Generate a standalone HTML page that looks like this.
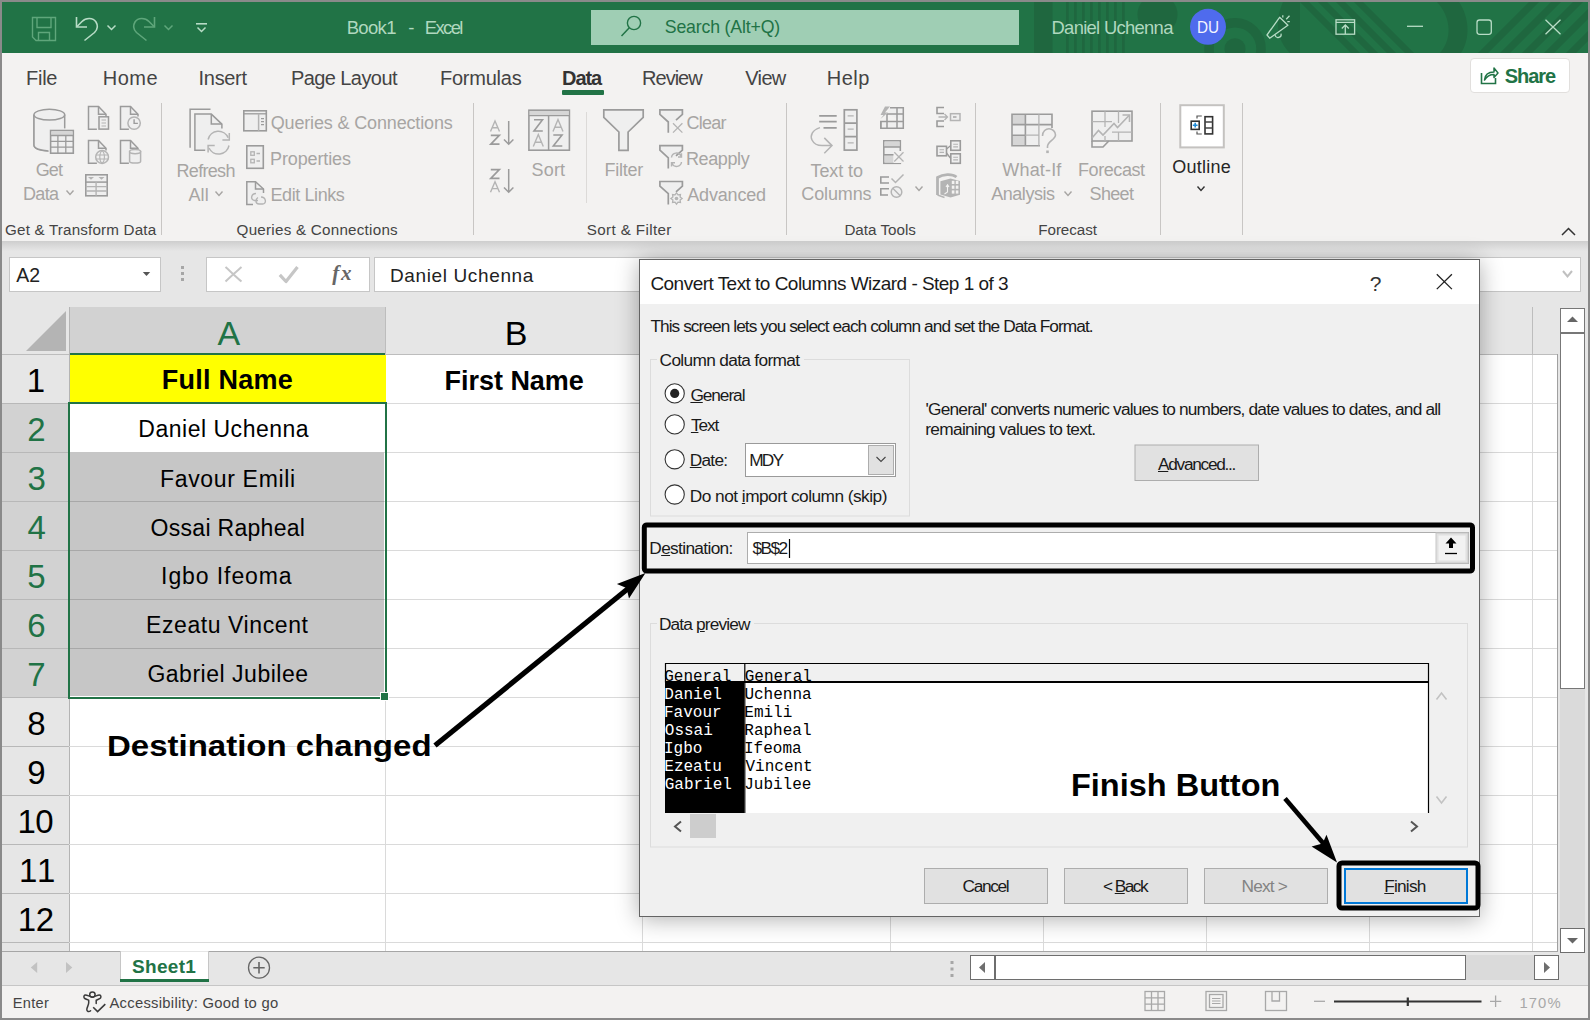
<!DOCTYPE html>
<html><head><meta charset='utf-8'><title>Excel</title><style>
*{margin:0;padding:0;box-sizing:border-box}
html,body{width:1590px;height:1020px;overflow:hidden;background:#8a8a8a;font-family:'Liberation Sans',sans-serif}
.a{position:absolute}
.t{position:absolute;white-space:pre;line-height:1;font-family:'Liberation Sans',sans-serif}
svg.a{overflow:visible}
</style></head><body>
<div class="a" style="left:2px;top:2px;width:1586px;height:51px;background:#217346;overflow:hidden"></div>
<svg class="a" style="left:2px;top:2px;overflow:hidden" width="1586" height="51" viewBox="2 2 1586 51"><rect x="1034" y="2" width="18.5" height="51" fill="#1f673f"/><rect x="1066" y="2" width="2.7" height="51" fill="#1f673f"/><rect x="1074" y="2" width="2.7" height="51" fill="#1f673f"/><rect x="1082" y="2" width="2.7" height="51" fill="#1f673f"/><rect x="1090" y="2" width="2.7" height="51" fill="#1f673f"/><rect x="1098" y="2" width="2.7" height="51" fill="#1f673f"/><rect x="1106" y="2" width="2.7" height="51" fill="#1f673f"/><rect x="1114" y="2" width="2.7" height="51" fill="#1f673f"/><rect x="1122" y="2" width="2.7" height="51" fill="#1f673f"/><circle cx="1157.5" cy="14.5" r="20" fill="#1f673f"/><circle cx="1235" cy="48.7" r="26" fill="none" stroke="#1f673f" stroke-width="9.5"/><circle cx="1235" cy="48.7" r="10.5" fill="#1f673f"/><path d="M1283 2 C1275 20 1276 40 1290 53 L1300 53 L1300 2 Z" fill="#1f673f"/><path d="M1300 2 L1309 2 L1360 53 L1351 53 Z" fill="#1f673f"/><path d="M1318 2 L1327 2 L1378 53 L1369 53 Z" fill="#1f673f"/><path d="M1336 2 L1345 2 L1396 53 L1387 53 Z" fill="#1f673f"/><path d="M1354 2 L1363 2 L1414 53 L1405 53 Z" fill="#1f673f"/><path d="M1437 2 C1452 18 1452 40 1440 53 L1461 53 C1470 40 1470 18 1459 2 Z" fill="#1f673f"/><path d="M1478 53 L1488 53 L1539 2 L1529 2 Z" fill="#1f673f"/><path d="M1500 53 L1510 53 L1561 2 L1551 2 Z" fill="#1f673f"/><path d="M1522 53 L1532 53 L1583 2 L1573 2 Z" fill="#1f673f"/><path d="M1544 53 L1554 53 L1605 2 L1595 2 Z" fill="#1f673f"/><path d="M1566 53 L1576 53 L1627 2 L1617 2 Z" fill="#1f673f"/></svg>
<svg class="a" style="left:0;top:0" width="1590" height="55" viewBox="0 0 1590 55"><path d="M32.5 17.5 H55.5 V40.5 H36 L32.5 37 Z" fill="none" stroke="#5fa67b" stroke-width="1.4"/><path d="M37 17.5 V27.5 H51 V17.5" fill="none" stroke="#5fa67b" stroke-width="1.4"/><path d="M38.5 40.5 V32.5 H49.5 V40.5" fill="none" stroke="#5fa67b" stroke-width="1.4"/><path d="M76.5 17 V27 H87" fill="none" stroke="#b8dcc6" stroke-width="1.6"/><path d="M77 26.5 L82 21.5 C86 17.5 93 17.5 96 22 C98.5 26 97 30 94.5 32.5 L84.5 40.5" fill="none" stroke="#b8dcc6" stroke-width="1.6"/><path d="M107.5 25.5 L111.5 29.5 L115.5 25.5" fill="none" stroke="#b8dcc6" stroke-width="1.5"/><path d="M154.5 17 V27 H144" fill="none" stroke="#5fa67b" stroke-width="1.6"/><path d="M154 26.5 L149 21.5 C145 17.5 138 17.5 135 22 C132.5 26 134 30 136.5 32.5 L146.5 40.5" fill="none" stroke="#5fa67b" stroke-width="1.6"/><path d="M164.5 25.5 L168.5 29.5 L172.5 25.5" fill="none" stroke="#5fa67b" stroke-width="1.5"/><path d="M196 23.8 H207" stroke="#b8dcc6" stroke-width="1.6"/><path d="M197.5 27.5 L201.5 31.5 L205.5 27.5" fill="none" stroke="#b8dcc6" stroke-width="1.5"/><rect x="591.5" y="10.5" width="427" height="34" fill="#9fceb4" stroke="#9fceb4"/><circle cx="634" cy="23" r="6.6" fill="none" stroke="#217346" stroke-width="1.4"/><path d="M629.3 27.8 L621.5 36" stroke="#217346" stroke-width="1.5"/><circle cx="1208" cy="26.8" r="18" fill="#4f6bed"/><path d="M1267 35 L1279.6 17.3 L1287.9 25.3 L1269.7 38.2 Z" fill="none" stroke="#b8dcc6" stroke-width="1.3" stroke-linejoin="round"/><path d="M1275 35.2 A3 3 0 0 0 1281 33.6" fill="none" stroke="#b8dcc6" stroke-width="1.3"/><path d="M1282.8 15.3 V17.5 M1286.2 19.3 L1289.5 15.8 M1287.3 21.7 H1289.8" stroke="#b8dcc6" stroke-width="1.3"/><rect x="1336" y="19.8" width="18.6" height="14.4" fill="none" stroke="#b8dcc6" stroke-width="1.3"/><path d="M1336 22.3 H1354.6 M1345.3 25 V34 M1341.8 28.5 L1345.3 25 L1348.8 28.5" fill="none" stroke="#b8dcc6" stroke-width="1.3"/><path d="M1407 26.3 H1423" stroke="#b8dcc6" stroke-width="1.3"/><rect x="1477" y="20" width="14.3" height="14.3" rx="2.5" fill="none" stroke="#b8dcc6" stroke-width="1.3"/><path d="M1545.5 19.8 L1560.5 34.2 M1560.5 19.8 L1545.5 34.2" stroke="#b8dcc6" stroke-width="1.3"/></svg>
<div class="t" style="left:346.70px;top:18.94px;font-size:18.5px;color:#b0d8bf;letter-spacing:-0.675px;">Book1</div>
<div class="t" style="left:408.30px;top:18.94px;font-size:18.5px;color:#b0d8bf;">-</div>
<div class="t" style="left:424.80px;top:18.94px;font-size:18.5px;color:#b0d8bf;letter-spacing:-1.650px;">Excel</div>
<div class="t" style="left:664.80px;top:19.21px;font-size:17.7px;color:#217346;letter-spacing:-0.162px;">Search (Alt+Q)</div>
<div class="t" style="left:1051.50px;top:18.92px;font-size:18.4px;color:#b0d8bf;letter-spacing:-0.692px;">Daniel Uchenna</div>
<div class="t" style="left:1197.06px;top:19.95px;font-size:16px;color:#f4f4ff;transform:scaleX(0.9565);transform-origin:0 0;">DU</div>
<div class="a" style="left:2px;top:53px;width:1586px;height:188px;background:#f3f2f1"></div>
<div class="a" style="left:2px;top:241px;width:1586px;height:66px;background:#e6e6e6"></div>
<div class="a" style="left:2px;top:241px;width:1586px;height:10px;background:linear-gradient(#cecece,#e6e6e6)"></div>
<div class="t" style="left:26.00px;top:67.77px;font-size:20px;color:#444444;letter-spacing:-0.267px;">File</div>
<div class="t" style="left:102.70px;top:67.77px;font-size:20px;color:#444444;letter-spacing:0.500px;">Home</div>
<div class="t" style="left:198.60px;top:67.77px;font-size:20px;color:#444444;letter-spacing:-0.320px;">Insert</div>
<div class="t" style="left:290.90px;top:67.77px;font-size:20px;color:#444444;letter-spacing:-0.570px;">Page Layout</div>
<div class="t" style="left:439.90px;top:67.77px;font-size:20px;color:#444444;letter-spacing:-0.229px;">Formulas</div>
<div class="t" style="left:642.10px;top:67.77px;font-size:20px;color:#444444;letter-spacing:-1.000px;">Review</div>
<div class="t" style="left:745.30px;top:67.77px;font-size:20px;color:#444444;letter-spacing:-0.667px;">View</div>
<div class="t" style="left:826.70px;top:67.77px;font-size:20px;color:#444444;letter-spacing:0.533px;">Help</div>
<div class="t" style="left:562.10px;top:67.57px;font-size:20px;color:#333;font-weight:bold;letter-spacing:-1.067px;">Data</div>
<div class="a" style="left:562px;top:90px;width:42px;height:5px;background:#217346;border-radius:1px"></div>
<div class="a" style="left:161px;top:103px;width:1px;height:132px;background:#c8c6c4"></div>
<div class="a" style="left:473px;top:103px;width:1px;height:132px;background:#c8c6c4"></div>
<div class="a" style="left:786px;top:103px;width:1px;height:132px;background:#c8c6c4"></div>
<div class="a" style="left:975px;top:103px;width:1px;height:132px;background:#c8c6c4"></div>
<div class="a" style="left:1160px;top:103px;width:1px;height:132px;background:#c8c6c4"></div>
<div class="a" style="left:1242px;top:103px;width:1px;height:132px;background:#c8c6c4"></div>
<div class="a" style="left:586px;top:112px;width:1px;height:91px;background:#dcdad8"></div>
<div class="t" style="left:5.00px;top:222.43px;font-size:15.2px;color:#444444;letter-spacing:0.184px;">Get &amp; Transform Data</div>
<div class="t" style="left:236.60px;top:222.43px;font-size:15.2px;color:#444444;letter-spacing:0.245px;">Queries &amp; Connections</div>
<div class="t" style="left:586.70px;top:222.43px;font-size:15.2px;color:#444444;letter-spacing:0.375px;">Sort &amp; Filter</div>
<div class="t" style="left:844.40px;top:222.43px;font-size:15.2px;color:#444444;">Data Tools</div>
<div class="t" style="left:1038.30px;top:222.43px;font-size:15.2px;color:#444444;letter-spacing:-0.071px;">Forecast</div>
<div class="t" style="left:35.70px;top:161.06px;font-size:18px;color:#a7a5a3;letter-spacing:-0.900px;">Get</div>
<div class="t" style="left:22.90px;top:185.16px;font-size:18px;color:#a7a5a3;letter-spacing:-0.633px;">Data</div>
<div class="t" style="left:176.50px;top:161.96px;font-size:18px;color:#a7a5a3;letter-spacing:-0.683px;">Refresh</div>
<div class="t" style="left:188.40px;top:185.86px;font-size:18px;color:#a7a5a3;letter-spacing:0.200px;">All</div>
<div class="t" style="left:270.70px;top:114.16px;font-size:18px;color:#a7a5a3;letter-spacing:-0.150px;">Queries &amp; Connections</div>
<div class="t" style="left:270.10px;top:149.96px;font-size:18px;color:#a7a5a3;letter-spacing:-0.133px;">Properties</div>
<div class="t" style="left:270.50px;top:186.06px;font-size:18px;color:#a7a5a3;letter-spacing:-0.411px;">Edit Links</div>
<div class="t" style="left:531.50px;top:161.26px;font-size:18px;color:#a7a5a3;letter-spacing:0.200px;">Sort</div>
<div class="t" style="left:604.60px;top:161.26px;font-size:18px;color:#a7a5a3;letter-spacing:-0.260px;">Filter</div>
<div class="t" style="left:686.40px;top:113.86px;font-size:18px;color:#a7a5a3;letter-spacing:-0.700px;">Clear</div>
<div class="t" style="left:685.90px;top:149.76px;font-size:18px;color:#a7a5a3;letter-spacing:-0.383px;">Reapply</div>
<div class="t" style="left:687.30px;top:185.66px;font-size:18px;color:#a7a5a3;letter-spacing:-0.186px;">Advanced</div>
<div class="t" style="left:810.60px;top:161.56px;font-size:18px;color:#a7a5a3;letter-spacing:-0.117px;">Text to</div>
<div class="t" style="left:801.30px;top:185.26px;font-size:18px;color:#a7a5a3;letter-spacing:-0.117px;">Columns</div>
<div class="t" style="left:1002.30px;top:161.26px;font-size:18px;color:#a7a5a3;letter-spacing:0.167px;">What-If</div>
<div class="t" style="left:991.30px;top:185.26px;font-size:18px;color:#a7a5a3;letter-spacing:-0.486px;">Analysis</div>
<div class="t" style="left:1078.00px;top:161.26px;font-size:18px;color:#a7a5a3;letter-spacing:-0.414px;">Forecast</div>
<div class="t" style="left:1089.60px;top:185.26px;font-size:18px;color:#a7a5a3;letter-spacing:-0.675px;">Sheet</div>
<div class="t" style="left:1172.30px;top:157.66px;font-size:18px;color:#262626;letter-spacing:0.233px;">Outline</div>
<svg class="a" style="left:66px;top:190px;" width="8" height="5" viewBox="0 0 8 5"><path d="M0.5 0.5 L4.0 4.5 L7.5 0.5" fill="none" stroke="#a7a5a3" stroke-width="1.4"/></svg>
<svg class="a" style="left:215px;top:191px;" width="8" height="5" viewBox="0 0 8 5"><path d="M0.5 0.5 L4.0 4.5 L7.5 0.5" fill="none" stroke="#a7a5a3" stroke-width="1.4"/></svg>
<svg class="a" style="left:914.5px;top:186px;" width="8" height="5" viewBox="0 0 8 5"><path d="M0.5 0.5 L4.0 4.5 L7.5 0.5" fill="none" stroke="#a7a5a3" stroke-width="1.4"/></svg>
<svg class="a" style="left:1064px;top:191px;" width="8" height="5" viewBox="0 0 8 5"><path d="M0.5 0.5 L4.0 4.5 L7.5 0.5" fill="none" stroke="#a7a5a3" stroke-width="1.4"/></svg>
<svg class="a" style="left:1197px;top:186px;" width="8" height="5" viewBox="0 0 8 5"><path d="M0.5 0.5 L4.0 4.5 L7.5 0.5" fill="none" stroke="#333" stroke-width="1.4"/></svg>
<div class="a" style="left:1469.5px;top:57.5px;width:100px;height:35px;background:#fff;border:1px solid #e1dfdd;border-radius:4px"></div>
<div class="t" style="left:1504.70px;top:66.27px;font-size:20px;color:#217346;font-weight:bold;letter-spacing:-1.050px;">Share</div>
<svg class="a" style="left:1480px;top:66px;" width="19" height="19" viewBox="0 0 19 19"><path d="M1.5 7 V17.5 H15.5 V12" fill="none" stroke="#217346" stroke-width="1.6"/><path d="M4.5 14 C5 8 9 6 14 6 V2 L18 7 L14 11.5 V8.5 C10 8.5 7 10 4.5 14Z" fill="none" stroke="#217346" stroke-width="1.5" stroke-linejoin="round"/></svg>
<svg class="a" style="left:1561px;top:227px;" width="15" height="9" viewBox="0 0 15 9"><path d="M1 8 L7.5 1.5 L14 8" fill="none" stroke="#333" stroke-width="1.5"/></svg>
<svg class="a" style="left:0;top:0" width="1590" height="250" viewBox="0 0 1590 250"><path d="M34 114.7 V145 C34 148.5 41 150.7 48.5 150.7" fill="#efefef" stroke="#9b9b9b" stroke-width="1.5" /><path d="M34 114.7 V145 C34 149 42 151 49 151 L50 130 L64.7 130 V114.7 Z" fill="#efefef"/><path d="M34 114.7 V145 C34 148.8 41 150.7 48.5 150.9" fill="none" stroke="#9b9b9b" stroke-width="1.5" /><path d="M64.7 114.7 V128.4" fill="none" stroke="#9b9b9b" stroke-width="1.5" /><ellipse cx="49.35" cy="114.7" rx="15.35" ry="5.4" fill="#efefef" stroke="#9b9b9b" stroke-width="1.5"/><rect x="50.6" y="130.5" width="22.7" height="22.7" fill="#efefef" stroke="#9b9b9b" stroke-width="1.6"/><rect x="51.4" y="131.3" width="21.1" height="4.2" fill="#d6d6d6"/><path d="M50.6 135.5 H73.3 M50.6 141.3 H73.3 M50.6 147.2 H73.3 M57.9 135.5 V153.2 M65.8 135.5 V153.2" fill="none" stroke="#9b9b9b" stroke-width="1.3" /><path d="M88.5 106.5 H98.5 L106.0 114.3 V129.3 H88.5 Z" fill="#efefef"/><path d="M96.9 129.3 H88.5 V106.5 H98.5 L106.0 114.3 V116.5" fill="none" stroke="#9b9b9b" stroke-width="1.5" /><path d="M98.5 106.5 V114.3 H106.0" fill="none" stroke="#9b9b9b" stroke-width="1.5" /><rect x="99" y="116.8" width="9.5" height="12.3" fill="#efefef" stroke="#9b9b9b" stroke-width="1.5"/><path d="M101.5 120 H106 M101.5 123 H106 M101.5 126 H106" fill="none" stroke="#b4b4b4" stroke-width="1.1" /><path d="M120.5 106.5 H130.5 L138.0 114.3 V129.3 H120.5 Z" fill="#efefef"/><path d="M128.9 129.3 H120.5 V106.5 H130.5 L138.0 114.3 V116.5" fill="none" stroke="#9b9b9b" stroke-width="1.5" /><path d="M130.5 106.5 V114.3 H138.0" fill="none" stroke="#9b9b9b" stroke-width="1.5" /><circle cx="134.1" cy="123.1" r="6.2" fill="#efefef" stroke="#b4b4b4" stroke-width="1.5"/><path d="M134.1 119.3 V123.4 H137.9" fill="none" stroke="#9b9b9b" stroke-width="1.4" /><path d="M88.5 140.5 H98.5 L106.0 148.3 V163.3 H88.5 Z" fill="#efefef"/><path d="M96.9 163.3 H88.5 V140.5 H98.5 L106.0 148.3 V150.5" fill="none" stroke="#9b9b9b" stroke-width="1.5" /><path d="M98.5 140.5 V148.3 H106.0" fill="none" stroke="#9b9b9b" stroke-width="1.5" /><circle cx="102.1" cy="157" r="6.4" fill="#efefef" stroke="#b4b4b4" stroke-width="1.5"/><path d="M95.8 155 H108.4 M95.8 159 H108.4 M102.1 150.6 C99 153 99 161 102.1 163.4 C105.2 161 105.2 153 102.1 150.6" fill="none" stroke="#b4b4b4" stroke-width="1.1" /><path d="M120.5 140.5 H130.5 L138.0 148.3 V163.3 H120.5 Z" fill="#efefef"/><path d="M128.9 163.3 H120.5 V140.5 H130.5 L138.0 148.3 V150.5" fill="none" stroke="#9b9b9b" stroke-width="1.5" /><path d="M130.5 140.5 V148.3 H138.0" fill="none" stroke="#9b9b9b" stroke-width="1.5" /><path d="M129.6 151.6 V161.5 C129.6 163.6 140.6 163.6 140.6 161.5 V151.6 Z" fill="#efefef" stroke="#b4b4b4" stroke-width="1.5"/><ellipse cx="135.1" cy="151.6" rx="5.5" ry="2.2" fill="#efefef" stroke="#b4b4b4" stroke-width="1.5"/><rect x="85.8" y="174.8" width="21.4" height="21" fill="#efefef" stroke="#9b9b9b" stroke-width="1.6"/><path d="M85.8 182.1 H107.2" fill="none" stroke="#9b9b9b" stroke-width="1.5" /><path d="M85.8 186.6 H107.2 M85.8 191 H107.2 M96.1 182.1 V195.8" fill="none" stroke="#b4b4b4" stroke-width="1.4" /><path d="M88 177 H94 L91 179.8 Z M98.5 177 H104.5 L101.5 179.8 Z" fill="#b4b4b4"/><path d="M190.1 147.7 V109.3 H210.5" fill="none" stroke="#9b9b9b" stroke-width="1.5" /><path d="M194.9 114.1 H211.3 L221.9 124.1 V150.3 H194.9 Z" fill="#efefef"/><path d="M205.2 150.3 H194.9 V114.1 H211.3 L221.9 124.1 V128.6" fill="none" stroke="#9b9b9b" stroke-width="1.5" /><path d="M211.3 114.1 V124.1 H221.9" fill="none" stroke="#9b9b9b" stroke-width="1.5" /><circle cx="218.4" cy="142.7" r="10.8" fill="#efefef" stroke="none"/><path d="M208.1 139.5 A10.6 10.6 0 0 1 228.2 137.8" fill="none" stroke="#b4b4b4" stroke-width="1.5" /><path d="M229.3 133.1 V140 H222.4" fill="none" stroke="#b4b4b4" stroke-width="1.5" /><path d="M229 145.5 A10.6 10.6 0 0 1 209 148" fill="none" stroke="#b4b4b4" stroke-width="1.5" /><path d="M208.1 152.5 V145.6 H214.7" fill="none" stroke="#b4b4b4" stroke-width="1.5" /><rect x="243.8" y="110.8" width="22.5" height="20" fill="#efefef" stroke="#9b9b9b" stroke-width="1.6"/><path d="M243.8 113.8 H266.3" fill="none" stroke="#9b9b9b" stroke-width="1.3" /><path d="M258.6 113.8 V130.8" fill="none" stroke="#b4b4b4" stroke-width="1.5" /><path d="M261 118.6 H264 M261 121.6 H264 M261 124.6 H264" fill="none" stroke="#9b9b9b" stroke-width="1.4" /><rect x="246.8" y="145.8" width="16.5" height="22.5" fill="#efefef" stroke="#9b9b9b" stroke-width="1.6"/><rect x="250.8" y="151.8" width="3.5" height="3.5" fill="#efefef" stroke="#b4b4b4" stroke-width="1.3"/><rect x="250.8" y="159.3" width="3.5" height="3.5" fill="#efefef" stroke="#b4b4b4" stroke-width="1.3"/><path d="M256.5 153.5 H260 M256.5 161 H260" fill="none" stroke="#b4b4b4" stroke-width="1.3" /><path d="M246.8 181.8 H255.5 L263.5 189 V204.5 H246.8 Z" fill="#efefef"/><path d="M253 204.5 H246.8 V181.8 H255.5 L263.5 189 V193" fill="none" stroke="#9b9b9b" stroke-width="1.5" /><path d="M255.5 181.8 V189 H263.5" fill="none" stroke="#9b9b9b" stroke-width="1.5" /><path d="M256 193.5 C251 193.5 250 200 254.5 200.5 H258 M261 197 C266 197 267 203.8 262.5 204 H259 C255 204 255.3 199 258 197.5" fill="none" stroke="#b4b4b4" stroke-width="1.4" /><path d="M490.5 131.5 L495 121 L499.5 131.5 M492.2 127.8 H497.8" fill="none" stroke="#b4b4b4" stroke-width="1.4" /><path d="M490.8 135.4 H499.3 L490.8 144.20000000000002 H499.5" fill="none" stroke="#9b9b9b" stroke-width="1.7" /><path d="M508.7 121 V144.5 M504 139.5 L508.7 144.3 L513.4 139.5" fill="none" stroke="#9b9b9b" stroke-width="1.5" /><path d="M490.8 169.6 H499.3 L490.8 178.4 H499.5" fill="none" stroke="#9b9b9b" stroke-width="1.7" /><path d="M490.5 192.3 L495 181.8 L499.5 192.3 M492.2 188.60000000000002 H497.8" fill="none" stroke="#b4b4b4" stroke-width="1.4" /><path d="M508.7 169 V192.5 M504 187.5 L508.7 192.3 L513.4 187.5" fill="none" stroke="#9b9b9b" stroke-width="1.5" /><rect x="528.9" y="110.2" width="40.5" height="40" fill="#efefef" stroke="#9b9b9b" stroke-width="1.6"/><rect x="529.7" y="111" width="38.9" height="4.6" fill="#d6d6d6"/><path d="M528.9 115.6 H569.4" fill="none" stroke="#9b9b9b" stroke-width="1.4" /><path d="M548.6 115.6 V150.2" fill="none" stroke="#9b9b9b" stroke-width="1.5" /><path d="M534 119.8 H542.5 L534 131 H542.8" fill="none" stroke="#9b9b9b" stroke-width="1.6" /><path d="M533.3 146.5 L538.3 134.5 L543.3 146.5 M535 142.3 H541.6" fill="none" stroke="#b4b4b4" stroke-width="1.4" /><path d="M553 131.5 L558 119.5 L563 131.5 M554.7 127.3 H561.3" fill="none" stroke="#b4b4b4" stroke-width="1.4" /><path d="M553.3 135 H562 L553.3 146 H562.3" fill="none" stroke="#9b9b9b" stroke-width="1.6" /><path d="M603.8 109.8 H643.2 V117.3 L628.1 132 V150.4 H618.9 V132 L603.8 117.3 Z" fill="#efefef" stroke="#9b9b9b" stroke-width="1.7" /><path d="M659.9 109.8 H682.4 V114.39999999999999 L675 121.8 L668.3 122.0 L659.9 114.39999999999999 Z" fill="#efefef"/><path d="M668.3 132.8 V122.0 L659.9 114.39999999999999 V109.8 H682.4 V114.39999999999999 L676 120.1" fill="none" stroke="#9b9b9b" stroke-width="1.7" /><path d="M673 123.2 L682.4 132.6 M682.4 123.2 L673 132.6" fill="none" stroke="#b4b4b4" stroke-width="1.3" /><path d="M659.9 145.6 H682.4 V150.2 L675 157.6 L668.3 157.79999999999998 L659.9 150.2 Z" fill="#efefef"/><path d="M668.3 168.6 V157.79999999999998 L659.9 150.2 V145.6 H682.4 V150.2 L676 155.9" fill="none" stroke="#9b9b9b" stroke-width="1.7" /><path d="M671.5 157.5 A5 5 0 0 1 681 156 M681.5 153.3 V157 H678 M681.5 162 A5 5 0 0 1 672 163.5 M671.5 166.5 V162.7 H675" fill="none" stroke="#b4b4b4" stroke-width="1.4" /><path d="M659.9 181.5 H682.4 V186.1 L675 193.5 L668.3 193.7 L659.9 186.1 Z" fill="#efefef"/><path d="M668.3 204.5 V193.7 L659.9 186.1 V181.5 H682.4 V186.1 L676 191.8" fill="none" stroke="#9b9b9b" stroke-width="1.7" /><path d="M682.10 198.50 L680.10 199.99 L680.46 202.46 L677.99 202.10 L676.50 204.10 L675.01 202.10 L672.54 202.46 L672.90 199.99 L670.90 198.50 L672.90 197.01 L672.54 194.54 L675.01 194.90 L676.50 192.90 L677.99 194.90 L680.46 194.54 L680.10 197.01 Z" fill="#efefef" stroke="#b4b4b4" stroke-width="1.3"/><circle cx="676.5" cy="198.5" r="1.8" fill="#b4b4b4"/><path d="M819.2 115.8 H836.7 M819.2 121.7 H836.7 M823.5 127.8 H836.7" fill="none" stroke="#9b9b9b" stroke-width="1.8" /><path d="M820 127.6 C812 130 810 136 812 140 C814 144 818 145.6 822 145.6 H831.5 M824.3 137.9 L832 145.6 L824.3 153.3" fill="none" stroke="#b4b4b4" stroke-width="1.5" /><rect x="844.3" y="109.8" width="12.6" height="40.3" fill="#efefef" stroke="#9b9b9b" stroke-width="1.7"/><path d="M844.3 123.1 H856.9 M844.3 136.6 H856.9" fill="none" stroke="#9b9b9b" stroke-width="1.6" /><path d="M847.6 115.8 H853.7 M847.6 129.2 H853.7 M847.6 142.9 H853.7" fill="none" stroke="#b4b4b4" stroke-width="1.2" /><path d="M887 114 V128.3 H880.8 V121.5 H903.3 M890 107.8 H903.3 V128.3 H880.8 M897 107.8 V128.3 M887 114 H903.3" fill="#efefef" stroke="#9b9b9b" stroke-width="1.5"/><path d="M880.8 121.5 V128.3" stroke="#9b9b9b" stroke-width="1.5"/><path d="M890 106.5 L885 106.5 L880.5 115 H883.5 L880.5 119 L888 112.5 H885 Z" fill="#b4b4b4"/><rect x="883.8" y="140.8" width="16.5" height="22.5" fill="#efefef" stroke="#9b9b9b" stroke-width="1.6"/><rect x="884.5" y="141.5" width="15" height="5.5" fill="#d6d6d6"/><rect x="884.5" y="155" width="9" height="7.5" fill="#d6d6d6"/><path d="M883.8 147 H900.3 M883.8 154.8 H894" fill="none" stroke="#9b9b9b" stroke-width="1.4" /><rect x="893.5" y="151" width="8" height="12" fill="#f3f2f1"/><path d="M894.3 152.3 L903.5 161.5 M903.5 152.3 L894.3 161.5" fill="none" stroke="#b4b4b4" stroke-width="1.3" /><path d="M889 177 H880.8 V183 H889" fill="none" stroke="#9b9b9b" stroke-width="1.6" /><path d="M891.5 178.5 L895.5 182.5 L903.5 174.5" fill="none" stroke="#b4b4b4" stroke-width="1.5" /><path d="M889 188.8 H880.8 V195 H888" fill="none" stroke="#9b9b9b" stroke-width="1.6" /><circle cx="896.5" cy="192" r="5.3" fill="#efefef" stroke="#b4b4b4" stroke-width="1.5"/><path d="M892.8 188.3 L900.2 195.7" fill="none" stroke="#b4b4b4" stroke-width="1.4" /><path d="M944 107.5 H937 V113.5 H944 M944 121 H937 V126.5 H944" fill="none" stroke="#9b9b9b" stroke-width="1.6" /><rect x="950.5" y="113.7" width="9.5" height="6.8" fill="#efefef" stroke="#b4b4b4" stroke-width="1.5"/><path d="M953 117 H956.5" fill="none" stroke="#9b9b9b" stroke-width="1.3" /><path d="M938.5 117 H947.5 M944.5 114 L947.5 117 L944.5 120" fill="none" stroke="#b4b4b4" stroke-width="1.3" /><rect x="937" y="146.3" width="9.5" height="9.5" fill="#efefef" stroke="#9b9b9b" stroke-width="1.6"/><rect x="950.8" y="140.8" width="9.5" height="9.5" fill="#efefef" stroke="#9b9b9b" stroke-width="1.6"/><rect x="950.8" y="153.8" width="9.5" height="9.5" fill="#efefef" stroke="#9b9b9b" stroke-width="1.6"/><path d="M939.5 149.8 H944 M939.5 152.4 H944 M953.2 144.3 H958 M953.2 146.9 H958 M953.2 157.3 H958 M953.2 159.9 H958" fill="none" stroke="#b4b4b4" stroke-width="1.1" /><path d="M946.5 149 L950.8 145.5 M946.5 153 L950.8 158.5" fill="none" stroke="#9b9b9b" stroke-width="1.3" /><path d="M937.5 195 V177.5 C943 174 952 173.5 956.5 177" fill="none" stroke="#b4b4b4" stroke-width="2.8"/><path d="M937.5 195 L944.5 197.5" fill="none" stroke="#b4b4b4" stroke-width="1.5"/><path d="M940.4 181.2 L950.5 178.4 L960 181 V194.8 L950.5 197.6 L940.4 194.5 Z" fill="#b4b4b4"/><rect x="951.8" y="180.8" width="2.6" height="3.2" fill="#f3f2f1"/><rect x="951.8" y="185.6" width="2.6" height="3.2" fill="#f3f2f1"/><rect x="951.8" y="190.4" width="2.6" height="3.2" fill="#f3f2f1"/><rect x="955.8" y="180.8" width="2.6" height="3.2" fill="#f3f2f1"/><rect x="955.8" y="185.6" width="2.6" height="3.2" fill="#f3f2f1"/><rect x="955.8" y="190.4" width="2.6" height="3.2" fill="#f3f2f1"/><path d="M947.5 185.5 V192 L944.5 194 M946 187 L947.5 184.8 L949 187" fill="none" stroke="#f3f2f1" stroke-width="1.1"/><rect x="1012" y="114.2" width="39.8" height="31.5" fill="#efefef"/><rect x="1012" y="114.2" width="13.4" height="10.4" fill="#d6d6d6"/><rect x="1012" y="135.2" width="13.4" height="10.5" fill="#d6d6d6"/><path d="M1052 136 V114.2 H1012 V145.7 H1044" fill="none" stroke="#9b9b9b" stroke-width="1.6" /><path d="M1025.4 114.2 V145.7 M1012 124.6 H1052 M1012 135.2 H1025.4" fill="none" stroke="#9b9b9b" stroke-width="1.6" /><path d="M1038.9 114.2 V145.7 M1025.4 135.2 H1038.9" fill="none" stroke="#b4b4b4" stroke-width="1.3" /><path d="M1040 128 H1054 V152 H1040 Z" fill="#f3f2f1"/><path d="M1042.5 136 C1042.5 131 1046 128.8 1049 128.8 C1052.5 128.8 1055.5 131.5 1055.5 135 C1055.5 139.5 1047.5 141.5 1047.5 146.5 V148" fill="none" stroke="#b4b4b4" stroke-width="1.6" /><rect x="1046.2" y="150.5" width="2.6" height="2.6" fill="#b4b4b4"/><rect x="1092" y="111.2" width="40" height="29.8" fill="#efefef" stroke="#9b9b9b" stroke-width="1.6"/><path d="M1092 141 V147 H1103 L1108.8 141" fill="none" stroke="#9b9b9b" stroke-width="1.6" /><path d="M1105 111.2 V127 M1118.5 111.2 V123 M1092 121.7 H1112 M1112 132.2 H1132 M1118.5 132.2 V141 M1105 136 V141" fill="none" stroke="#b4b4b4" stroke-width="1.3" /><path d="M1092 138 L1098.5 130.5 L1103 135 L1114 123.5 L1117.5 127.5 L1129.5 115" fill="none" stroke="#b4b4b4" stroke-width="1.6" /><path d="M1122.5 115 H1129.5 V122" fill="none" stroke="#b4b4b4" stroke-width="1.6" /><rect x="1180.3" y="105.2" width="43.5" height="42.2" fill="#fff" stroke="#c4c2c0" stroke-width="2"/><rect x="1191.2" y="121.2" width="8" height="8.2" fill="#fff" stroke="#333" stroke-width="1.6"/><path d="M1195.2 122.8 V127.6 M1192.8 125.2 H1197.6" fill="none" stroke="#1e8bd8" stroke-width="1.6" /><path d="M1197 118.5 V116 H1201.8 M1197 131.5 V134 H1201.8" fill="none" stroke="#555" stroke-width="1.2" /><rect x="1205" y="116.7" width="7.6" height="17.2" fill="#fff" stroke="#333" stroke-width="1.6"/><path d="M1205 122 H1212.6 M1205 128 H1212.6" fill="none" stroke="#444" stroke-width="1.3" /></svg>
<div class="a" style="left:9px;top:257px;width:152px;height:35px;background:#fff;border:1px solid #c6c6c6"></div>
<div class="a" style="left:206px;top:257px;width:164px;height:35px;background:#fff;border:1px solid #c6c6c6"></div>
<div class="a" style="left:374px;top:257px;width:1207px;height:35px;background:#fff;border:1px solid #c6c6c6"></div>
<svg class="a" style="left:0;top:240px" width="1590" height="60" viewBox="0 240 1590 60"><path d="M142.8 272 H150.2 L146.5 276 Z" fill="#555"/><rect x="181" y="266.0" width="3" height="3" fill="#a6a6a6"/><rect x="181" y="272.0" width="3" height="3" fill="#a6a6a6"/><rect x="181" y="278.0" width="3" height="3" fill="#a6a6a6"/><path d="M225.5 267 C229 270 235 276 241.5 281.5 M241.5 267 C237 271 231 276 225.5 281.5" fill="none" stroke="#c6c6c6" stroke-width="2"/><path d="M279.8 274.8 L286 281.5 L297.5 267" fill="none" stroke="#c6c6c6" stroke-width="3.2" stroke-linejoin="round"/><path d="M1563 271 L1567.5 276.5 L1572 271" fill="none" stroke="#c0c0c0" stroke-width="2"/></svg>
<div class="t" style="left:16.20px;top:266.29px;font-size:19.5px;color:#222;letter-spacing:0.100px;">A2</div>
<div class="t" style="left:389.90px;top:266.41px;font-size:19px;color:#222;letter-spacing:0.638px;">Daniel Uchenna</div>
<div class="t" style="left:332.30px;top:263.22px;font-size:21px;color:#666;letter-spacing:1.600px;font-family:'Liberation Serif',serif;font-style:italic;font-weight:bold;">fx</div>
<div class="a" style="left:2px;top:307px;width:1556px;height:47px;background:#e6e6e6"></div>
<div class="a" style="left:2px;top:354px;width:67px;height:597px;background:#e6e6e6"></div>
<div class="a" style="left:69px;top:354px;width:1489px;height:597px;background:#fff"></div>
<svg class="a" style="left:26px;top:311px;" width="40" height="40" viewBox="0 0 40 40"><path d="M40 0 L40 40 L0 40 Z" fill="#b4b4b4"/></svg>
<div class="a" style="left:70px;top:307px;width:315px;height:47px;background:#d2d2d2"></div>
<div class="a" style="left:2px;top:403px;width:67px;height:294px;background:#d2d2d2"></div>
<div class="a" style="left:69px;top:307px;width:1px;height:47px;background:#bdbdbd"></div>
<div class="a" style="left:385px;top:307px;width:1px;height:47px;background:#bdbdbd"></div>
<div class="a" style="left:642px;top:307px;width:1px;height:47px;background:#bdbdbd"></div>
<div class="a" style="left:890px;top:307px;width:1px;height:47px;background:#bdbdbd"></div>
<div class="a" style="left:1043px;top:307px;width:1px;height:47px;background:#bdbdbd"></div>
<div class="a" style="left:1206px;top:307px;width:1px;height:47px;background:#bdbdbd"></div>
<div class="a" style="left:1369px;top:307px;width:1px;height:47px;background:#bdbdbd"></div>
<div class="a" style="left:1532px;top:307px;width:1px;height:47px;background:#bdbdbd"></div>
<div class="a" style="left:2px;top:354px;width:1556px;height:1px;background:#bdbdbd"></div>
<div class="a" style="left:69px;top:353px;width:316px;height:2px;background:#217346"></div>
<div class="a" style="left:69px;top:307px;width:1px;height:644px;background:#b4b4b4"></div>
<div class="a" style="left:2px;top:403px;width:67px;height:1px;background:#b8b8b8"></div>
<div class="a" style="left:2px;top:452px;width:67px;height:1px;background:#b8b8b8"></div>
<div class="a" style="left:2px;top:501px;width:67px;height:1px;background:#b8b8b8"></div>
<div class="a" style="left:2px;top:550px;width:67px;height:1px;background:#b8b8b8"></div>
<div class="a" style="left:2px;top:599px;width:67px;height:1px;background:#b8b8b8"></div>
<div class="a" style="left:2px;top:648px;width:67px;height:1px;background:#b8b8b8"></div>
<div class="a" style="left:2px;top:697px;width:67px;height:1px;background:#b8b8b8"></div>
<div class="a" style="left:2px;top:746px;width:67px;height:1px;background:#b8b8b8"></div>
<div class="a" style="left:2px;top:795px;width:67px;height:1px;background:#b8b8b8"></div>
<div class="a" style="left:2px;top:844px;width:67px;height:1px;background:#b8b8b8"></div>
<div class="a" style="left:2px;top:893px;width:67px;height:1px;background:#b8b8b8"></div>
<div class="a" style="left:2px;top:942px;width:67px;height:1px;background:#b8b8b8"></div>
<div class="a" style="left:385px;top:355px;width:1px;height:596px;background:#dadada"></div>
<div class="a" style="left:642px;top:355px;width:1px;height:596px;background:#dadada"></div>
<div class="a" style="left:890px;top:355px;width:1px;height:596px;background:#dadada"></div>
<div class="a" style="left:1043px;top:355px;width:1px;height:596px;background:#dadada"></div>
<div class="a" style="left:1206px;top:355px;width:1px;height:596px;background:#dadada"></div>
<div class="a" style="left:1369px;top:355px;width:1px;height:596px;background:#dadada"></div>
<div class="a" style="left:1532px;top:355px;width:1px;height:596px;background:#dadada"></div>
<div class="a" style="left:69px;top:403px;width:1489px;height:1px;background:#dadada"></div>
<div class="a" style="left:69px;top:452px;width:1489px;height:1px;background:#dadada"></div>
<div class="a" style="left:69px;top:501px;width:1489px;height:1px;background:#dadada"></div>
<div class="a" style="left:69px;top:550px;width:1489px;height:1px;background:#dadada"></div>
<div class="a" style="left:69px;top:599px;width:1489px;height:1px;background:#dadada"></div>
<div class="a" style="left:69px;top:648px;width:1489px;height:1px;background:#dadada"></div>
<div class="a" style="left:69px;top:697px;width:1489px;height:1px;background:#dadada"></div>
<div class="a" style="left:69px;top:746px;width:1489px;height:1px;background:#dadada"></div>
<div class="a" style="left:69px;top:795px;width:1489px;height:1px;background:#dadada"></div>
<div class="a" style="left:69px;top:844px;width:1489px;height:1px;background:#dadada"></div>
<div class="a" style="left:69px;top:893px;width:1489px;height:1px;background:#dadada"></div>
<div class="a" style="left:69px;top:942px;width:1489px;height:1px;background:#dadada"></div>
<div class="a" style="left:1557px;top:307px;width:31px;height:644px;background:#e6e6e6"></div>
<div class="a" style="left:1557px;top:354px;width:1px;height:597px;background:#a0a0a0"></div>
<svg class="a" style="left:0;top:0" width="1590" height="960" viewBox="0 0 1590 960"><rect x="1560" y="308" width="25" height="644" fill="#dadada"/><rect x="1560.5" y="308.5" width="24" height="24" fill="#fff" stroke="#777"/><rect x="1560.5" y="333.5" width="24" height="355" fill="#fff" stroke="#777"/><rect x="1560.5" y="928.5" width="24" height="24" fill="#fff" stroke="#6e6e6e"/><path d="M1567 322 H1578 L1572.5 316.5 Z" fill="#666"/><path d="M1567 938 H1578 L1572.5 943.5 Z" fill="#666"/></svg>
<div class="a" style="left:70px;top:355px;width:316px;height:48px;background:#ffff00"></div>
<div class="a" style="left:70px;top:452px;width:314px;height:244px;background:#c6c6c6"></div>
<div class="a" style="left:70px;top:501px;width:314px;height:1px;background:#a8a8a8"></div>
<div class="a" style="left:70px;top:550px;width:314px;height:1px;background:#a8a8a8"></div>
<div class="a" style="left:70px;top:599px;width:314px;height:1px;background:#a8a8a8"></div>
<div class="a" style="left:70px;top:648px;width:314px;height:1px;background:#a8a8a8"></div>
<div class="a" style="left:68px;top:402px;width:319px;height:297px;border:2px solid #217346"></div>
<div class="a" style="left:380px;top:692px;width:9px;height:9px;background:#217346;border:1px solid #fff"></div>
<div class="t" style="left:217.60px;top:315.71px;font-size:34px;color:#217346;">A</div>
<div class="t" style="left:504.70px;top:315.91px;font-size:34px;color:#000;">B</div>
<div class="t" style="left:26.85px;top:363.96px;font-size:33px;color:#000;">1</div>
<div class="t" style="left:27.35px;top:412.96px;font-size:33px;color:#217346;">2</div>
<div class="t" style="left:27.40px;top:461.96px;font-size:33px;color:#217346;">3</div>
<div class="t" style="left:27.45px;top:510.96px;font-size:33px;color:#217346;">4</div>
<div class="t" style="left:27.35px;top:559.96px;font-size:33px;color:#217346;">5</div>
<div class="t" style="left:27.20px;top:608.96px;font-size:33px;color:#217346;">6</div>
<div class="t" style="left:27.35px;top:657.96px;font-size:33px;color:#217346;">7</div>
<div class="t" style="left:27.30px;top:706.96px;font-size:33px;color:#000;">8</div>
<div class="t" style="left:27.35px;top:755.96px;font-size:33px;color:#000;">9</div>
<div class="t" style="left:17.50px;top:804.96px;font-size:33px;color:#000;letter-spacing:-0.700px;">10</div>
<div class="t" style="left:18.90px;top:853.96px;font-size:33px;color:#000;letter-spacing:2.100px;">11</div>
<div class="t" style="left:17.70px;top:902.96px;font-size:33px;color:#000;letter-spacing:-0.300px;">12</div>
<div class="t" style="left:161.70px;top:366.94px;font-size:27px;color:#000;font-weight:bold;letter-spacing:0.250px;">Full Name</div>
<div class="t" style="left:444.60px;top:367.94px;font-size:27px;color:#000;font-weight:bold;letter-spacing:-0.033px;">First Name</div>
<div class="t" style="left:138.30px;top:418.13px;font-size:23px;color:#000;letter-spacing:0.515px;">Daniel Uchenna</div>
<div class="t" style="left:160.00px;top:468.33px;font-size:23px;color:#000;letter-spacing:0.664px;">Favour Emili</div>
<div class="t" style="left:150.50px;top:516.83px;font-size:23px;color:#000;letter-spacing:0.300px;">Ossai Rapheal</div>
<div class="t" style="left:161.10px;top:565.33px;font-size:23px;color:#000;letter-spacing:0.910px;">Igbo Ifeoma</div>
<div class="t" style="left:146.00px;top:614.33px;font-size:23px;color:#000;letter-spacing:0.585px;">Ezeatu Vincent</div>
<div class="t" style="left:147.40px;top:662.63px;font-size:23px;color:#000;letter-spacing:0.521px;">Gabriel Jubilee</div>
<div class="a" style="left:2px;top:951px;width:1586px;height:34px;background:#e6e6e6"></div>
<div class="a" style="left:2px;top:951px;width:118px;height:1px;background:#a6a6a6"></div>
<div class="a" style="left:208px;top:951px;width:1350px;height:1px;background:#a6a6a6"></div>
<div class="a" style="left:2px;top:985px;width:1586px;height:1px;background:#c6c6c6"></div>
<div class="a" style="left:2px;top:986px;width:1586px;height:32px;background:#f3f2f1"></div>
<div class="a" style="left:120px;top:951px;width:1px;height:31px;background:#c6c6c6"></div>
<div class="a" style="left:208px;top:951px;width:1px;height:31px;background:#c6c6c6"></div>
<div class="a" style="left:121px;top:952px;width:87px;height:28px;background:#fff"></div>
<div class="a" style="left:120px;top:979px;width:89px;height:3px;background:#217346"></div>
<div class="t" style="left:132.10px;top:957.41px;font-size:19px;color:#217346;font-weight:bold;letter-spacing:0.280px;">Sheet1</div>
<svg class="a" style="left:0;top:940px" width="1590" height="80" viewBox="0 940 1590 80"><path d="M37.2 962 V973 L30.8 967.5 Z" fill="#c2c2c2"/><path d="M66 962 V973 L72.3 967.5 Z" fill="#c2c2c2"/><circle cx="259" cy="967.7" r="10.5" fill="none" stroke="#666" stroke-width="1.3"/><path d="M259 962 V973.5 M253.3 967.7 H264.7" stroke="#666" stroke-width="1.6"/><rect x="950.5" y="961.0" width="3" height="3" fill="#a6a6a6"/><rect x="950.5" y="967.5" width="3" height="3" fill="#a6a6a6"/><rect x="950.5" y="974.0" width="3" height="3" fill="#a6a6a6"/><rect x="970" y="955" width="565" height="25" fill="#dadada"/><rect x="1560.5" y="928.5" width="24" height="24" fill="#fff" stroke="#6e6e6e"/><path d="M1567 938 H1578 L1572.5 943.5 Z" fill="#666"/><rect x="995.5" y="955.5" width="470" height="24" fill="#fff" stroke="#6e6e6e"/><rect x="970.5" y="955.5" width="24.5" height="24" fill="#fff" stroke="#6e6e6e"/><path d="M995 955 V980" stroke="#6e6e6e" stroke-width="2"/><rect x="1534.5" y="955.5" width="24" height="24" fill="#fff" stroke="#6e6e6e"/><path d="M985 962 V973 L979 967.5 Z" fill="#6e6e6e"/><path d="M1544 962 V973 L1550 967.5 Z" fill="#6e6e6e"/><circle cx="92.4" cy="994.6" r="2.7" fill="none" stroke="#3a3a3a" stroke-width="1.5"/><path d="M90.6 1010.8 C89 1012.3 86.6 1011.6 86.8 1009.3 C87.1 1006.8 88.7 1005 88.7 1002.8 V1000.2 C87 999.4 85 999 84.3 998 C83.4 996.6 84 995 85.6 995 C87.3 995 89.5 996.6 92.4 997.2 C95.3 996.6 97.5 995 99.2 995 C100.8 995 101.4 996.6 100.5 998 C99.8 999 97.8 999.4 96.2 1000.2 V1003.5" fill="none" stroke="#3a3a3a" stroke-width="1.5" stroke-linecap="round" stroke-linejoin="round"/><path d="M93.2 1007.3 L97.6 1011.6 L105.3 1004.2" fill="none" stroke="#3a3a3a" stroke-width="1.6"/><rect x="1145" y="991.5" width="19.5" height="19" fill="none" stroke="#a8a8a8" stroke-width="1.3"/><path d="M1151.5 991.5 V1010.5 M1158 991.5 V1010.5 M1145 997.8 H1164.5 M1145 1004.2 H1164.5" stroke="#a8a8a8" stroke-width="1.3"/><rect x="1206" y="991.5" width="20.5" height="19" fill="none" stroke="#a8a8a8" stroke-width="1.3"/><rect x="1209.5" y="994.5" width="13.5" height="13" fill="none" stroke="#a8a8a8" stroke-width="1.3"/><path d="M1212 998.5 H1220.5 M1212 1001 H1220.5 M1212 1003.5 H1220.5" stroke="#a8a8a8" stroke-width="1.1"/><rect x="1265.5" y="991.5" width="21" height="19" fill="none" stroke="#a8a8a8" stroke-width="1.3"/><path d="M1272 991.5 V1001 H1279.5 V991.5" fill="none" stroke="#a8a8a8" stroke-width="1.3"/><path d="M1314 1001.3 H1325" stroke="#a8a8a8" stroke-width="1.3"/><path d="M1334 1001.5 H1481.5" stroke="#333" stroke-width="2"/><path d="M1407.8 997.5 V1006" stroke="#333" stroke-width="2.2"/><path d="M1490 1001.3 H1501.3 M1495.6 995.5 V1007" stroke="#a8a8a8" stroke-width="1.3"/></svg>
<div class="t" style="left:12.70px;top:995.84px;font-size:14.6px;color:#444;letter-spacing:0.325px;">Enter</div>
<div class="t" style="left:109.40px;top:995.67px;font-size:14.8px;color:#444;letter-spacing:0.283px;">Accessibility: Good to go</div>
<div class="t" style="left:1519.40px;top:995.67px;font-size:14.8px;color:#a8a8a8;letter-spacing:1.133px;">170%</div>
<div class="a" style="left:639px;top:259px;width:841px;height:658px;background:#f0f0f0;border:1px solid #646464;box-shadow:0 2px 22px rgba(0,0,0,.32)"></div>
<div class="a" style="left:640px;top:260px;width:839px;height:44px;background:#fff"></div>
<div class="t" style="left:650.40px;top:273.71px;font-size:19px;color:#1a1a1a;letter-spacing:-0.528px;">Convert Text to Columns Wizard - Step 1 of 3</div>
<div class="t" style="left:1369.80px;top:272.72px;font-size:21px;color:#333;">?</div>
<svg class="a" style="left:0;top:0" width="1590" height="1020" viewBox="0 0 1590 1020"><path d="M1436.8 274.2 L1451.9 289.1 M1451.9 274.2 L1436.8 289.1" stroke="#222" stroke-width="1.3"/><rect x="650.5" y="359.5" width="259" height="156.5" fill="none" stroke="#dcdcdc"/><rect x="650.5" y="623.5" width="817" height="223.5" fill="none" stroke="#dcdcdc"/><circle cx="674.7" cy="393.4" r="9.6" fill="#fff" stroke="#333" stroke-width="1.1"/><circle cx="674.7" cy="424.4" r="9.6" fill="#fff" stroke="#333" stroke-width="1.1"/><circle cx="674.7" cy="459.3" r="9.6" fill="#fff" stroke="#333" stroke-width="1.1"/><circle cx="674.7" cy="494.5" r="9.6" fill="#fff" stroke="#333" stroke-width="1.1"/><circle cx="674.7" cy="393.4" r="4.6" fill="#222"/><rect x="745.5" y="443.5" width="150" height="33" fill="#fff" stroke="#9a9a9a"/><rect x="868.5" y="445.5" width="25" height="29" fill="#e1e1e1" stroke="#adadad"/><path d="M876.5 457 L881 461.5 L885.5 457" fill="none" stroke="#444" stroke-width="1.1"/><rect x="1135" y="445" width="123.5" height="35.5" fill="#e1e1e1" stroke="#adadad"/><rect x="747.5" y="532.5" width="721" height="31" fill="#fff" stroke="#adadad"/><rect x="1436" y="533" width="32" height="30" fill="#e1e1e1" stroke="#c8c8c8"/><rect x="1438.5" y="535.5" width="27" height="25" fill="#f2f2f2"/><path d="M1451 537.5 L1456.5 543.5 H1453 V548 H1449 V543.5 H1445.5 Z" fill="#000"/><path d="M1445 553.5 H1457" stroke="#000" stroke-width="1.3"/><path d="M789.5 539 V558" stroke="#000" stroke-width="1.2"/><rect x="665" y="663.5" width="763.5" height="149.5" fill="#fff"/><rect x="665" y="663.5" width="763.5" height="19" fill="#f0f0f0"/><path d="M665.5 682.5 V663.5 H1428.5 V813" fill="none" stroke="#000" stroke-width="1.2"/><path d="M665 682 H1428.5" stroke="#000" stroke-width="2"/><path d="M744.8 663.5 V813" stroke="#000" stroke-width="1.2"/><rect x="665" y="683" width="79" height="130" fill="#000"/><path d="M1436.5 699.5 L1441.5 693 L1446.5 699.5" fill="none" stroke="#c2c2c2" stroke-width="1.6"/><path d="M1436.5 796.5 L1441.5 803 L1446.5 796.5" fill="none" stroke="#c2c2c2" stroke-width="1.6"/><path d="M681 821.5 L675 826.5 L681 831.5" fill="none" stroke="#555" stroke-width="2"/><path d="M1411 821.5 L1417 826.5 L1411 831.5" fill="none" stroke="#555" stroke-width="2"/><rect x="690" y="814" width="26" height="24" fill="#cdcdcd"/><rect x="924.5" y="868.5" width="123.0" height="35" fill="#e1e1e1" stroke="#adadad"/><rect x="1064.5" y="868.5" width="123.0" height="35" fill="#e1e1e1" stroke="#adadad"/><rect x="1204.5" y="868.5" width="123.0" height="35" fill="#e1e1e1" stroke="#adadad"/><rect x="1345" y="869" width="122" height="34" fill="#e1e1e1" stroke="#0078d7" stroke-width="2"/></svg>
<div class="t" style="left:650.40px;top:318.05px;font-size:17.3px;color:#1a1a1a;letter-spacing:-0.938px;">This screen lets you select each column and set the Data Format.</div>
<div class="a" style="left:657px;top:352px;width:147px;height:14px;background:#f0f0f0"></div>
<div class="t" style="left:659.60px;top:352.05px;font-size:17.3px;color:#1a1a1a;letter-spacing:-0.671px;">Column data format</div>
<div class="t" style="left:690.40px;top:386.65px;font-size:17.3px;color:#1a1a1a;letter-spacing:-1.067px;"><u>G</u>eneral</div>
<div class="t" style="left:690.90px;top:417.45px;font-size:17.3px;color:#1a1a1a;letter-spacing:-1.100px;"><u>T</u>ext</div>
<div class="t" style="left:689.80px;top:452.35px;font-size:17.3px;color:#1a1a1a;letter-spacing:-0.775px;"><u>D</u>ate:</div>
<div class="t" style="left:689.80px;top:487.55px;font-size:17.3px;color:#1a1a1a;letter-spacing:-0.527px;">Do not <u>i</u>mport column (skip)</div>
<div class="t" style="left:749.20px;top:451.85px;font-size:17.3px;color:#1a1a1a;letter-spacing:-1.800px;">MDY</div>
<div class="t" style="left:925.60px;top:400.85px;font-size:17.3px;color:#1a1a1a;letter-spacing:-0.807px;">'General' converts numeric values to numbers, date values to dates, and all</div>
<div class="t" style="left:925.30px;top:421.45px;font-size:17.3px;color:#1a1a1a;letter-spacing:-0.688px;">remaining values to text.</div>
<div class="t" style="left:1158.00px;top:455.65px;font-size:17.3px;color:#1a1a1a;letter-spacing:-1.290px;"><u>A</u>dvanced...</div>
<div class="t" style="left:649.30px;top:540.15px;font-size:17.3px;color:#1a1a1a;letter-spacing:-0.655px;">D<u>e</u>stination:</div>
<div class="t" style="left:752.60px;top:540.15px;font-size:17.3px;color:#1a1a1a;letter-spacing:-1.633px;">$B$2</div>
<div class="a" style="left:657px;top:616px;width:97px;height:14px;background:#f0f0f0"></div>
<div class="t" style="left:659.00px;top:615.55px;font-size:17.3px;color:#1a1a1a;letter-spacing:-0.864px;">Data <u>p</u>review</div>
<div class="t" style="left:664.20px;top:668.84px;font-size:16px;color:#000;font-family:'Liberation Mono',monospace;">General</div>
<div class="t" style="left:744.70px;top:668.84px;font-size:16px;color:#000;font-family:'Liberation Mono',monospace;">General</div>
<div class="t" style="left:664.30px;top:686.94px;font-size:16px;color:#fff;font-family:'Liberation Mono',monospace;">Daniel</div>
<div class="t" style="left:744.40px;top:686.94px;font-size:16px;color:#000;font-family:'Liberation Mono',monospace;">Uchenna</div>
<div class="t" style="left:664.00px;top:705.04px;font-size:16px;color:#fff;font-family:'Liberation Mono',monospace;">Favour</div>
<div class="t" style="left:744.30px;top:705.04px;font-size:16px;color:#000;font-family:'Liberation Mono',monospace;">Emili</div>
<div class="t" style="left:664.80px;top:723.14px;font-size:16px;color:#fff;font-family:'Liberation Mono',monospace;">Ossai</div>
<div class="t" style="left:744.30px;top:723.14px;font-size:16px;color:#000;font-family:'Liberation Mono',monospace;">Rapheal</div>
<div class="t" style="left:664.00px;top:741.24px;font-size:16px;color:#fff;font-family:'Liberation Mono',monospace;">Igbo</div>
<div class="t" style="left:744.00px;top:741.24px;font-size:16px;color:#000;font-family:'Liberation Mono',monospace;">Ifeoma</div>
<div class="t" style="left:664.30px;top:759.34px;font-size:16px;color:#fff;font-family:'Liberation Mono',monospace;">Ezeatu</div>
<div class="t" style="left:745.50px;top:759.34px;font-size:16px;color:#000;font-family:'Liberation Mono',monospace;">Vincent</div>
<div class="t" style="left:664.70px;top:777.44px;font-size:16px;color:#fff;font-family:'Liberation Mono',monospace;">Gabriel</div>
<div class="t" style="left:744.20px;top:777.44px;font-size:16px;color:#000;font-family:'Liberation Mono',monospace;">Jubilee</div>
<div class="t" style="left:962.60px;top:878.35px;font-size:17.3px;color:#1a1a1a;letter-spacing:-1.360px;">Cancel</div>
<div class="t" style="left:1102.90px;top:878.35px;font-size:17.3px;color:#1a1a1a;letter-spacing:-1.540px;">&lt; <u>B</u>ack</div>
<div class="t" style="left:1241.50px;top:878.35px;font-size:17.3px;color:#838383;letter-spacing:-0.800px;">Next &gt;</div>
<div class="t" style="left:1384.30px;top:878.35px;font-size:17.3px;color:#1a1a1a;letter-spacing:-0.820px;"><u>F</u>inish</div>
<svg class="a" style="left:0;top:0" width="1590" height="1020" viewBox="0 0 1590 1020"><rect x="644.3" y="524.9" width="828.2" height="46.2" rx="2.5" fill="none" stroke="#000" stroke-width="5"/><rect x="1339" y="863" width="139" height="45" rx="3" fill="none" stroke="#000" stroke-width="5"/><path d="M435 745.5 L630 587" stroke="#000" stroke-width="5.2"/><path d="M645.5 573 L616.9 584 L626.5 588 L629 598.4 Z" fill="#000"/><path d="M1285 798.6 L1326 846.5" stroke="#000" stroke-width="4.6"/><path d="M1337 862.5 L1326.5 834.7 L1322.5 843.5 L1311.6 846.5 Z" fill="#000"/></svg>
<div class="t" style="left:106.60px;top:731.40px;font-size:30px;color:#000;font-weight:bold;transform:scaleX(1.1000);transform-origin:0 0;">Destination changed</div>
<div class="t" style="left:1070.70px;top:770.15px;font-size:31px;color:#000;font-weight:bold;transform:scaleX(1.0480);transform-origin:0 0;">Finish Button</div>
</body></html>
